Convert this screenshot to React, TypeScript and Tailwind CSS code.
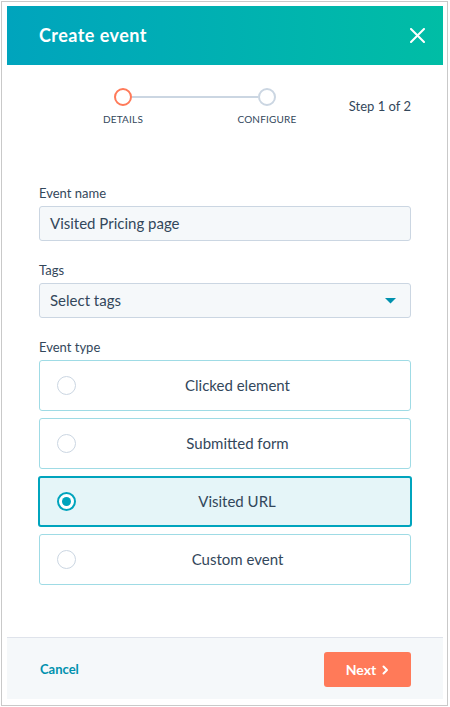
import { useState } from "react";

const eventTypes = ["Clicked element", "Submitted form", "Visited URL", "Custom event"];

function Radio({ checked }: { checked: boolean }) {
  return checked ? (
    <span className="w-[19px] h-[19px] rounded-full border-2 border-[#00a4bd] bg-white flex items-center justify-center shrink-0">
      <span className="w-[9px] h-[9px] rounded-full bg-[#00a4bd]" />
    </span>
  ) : (
    <span className="w-[19px] h-[19px] rounded-full border-[1.5px] border-[#cbd6e2] bg-white shrink-0" />
  );
}

export default function App() {
  const [selected, setSelected] = useState("Visited URL");

  return (
    <div className="w-[450px] h-[707px] bg-white pt-px pl-px font-['Lato',sans-serif] text-[#33475b]">
      <div className="w-[447px] h-[705px] border border-[#c9c9c9] pl-[5px] pr-[4px] pt-[4px] pb-[6px]">
        <div className="h-full flex flex-col bg-white">
          {/* Header */}
          <div className="h-[59px] shrink-0 flex items-center justify-between pl-8 pr-[18px] bg-gradient-to-r from-[#00a4bd] to-[#00bda5]">
            <h1 className="text-[18px] font-bold text-white tracking-[0.45px]">Create event</h1>
            <svg width="15" height="15" viewBox="0 0 15 15" fill="none" className="text-white">
              <path d="M1 1L14 14M14 1L1 14" stroke="currentColor" strokeWidth="2" strokeLinecap="round" />
            </svg>
          </div>

          {/* Body */}
          <div className="flex-1 px-8">
            {/* Stepper */}
            <div className="flex items-start pt-[23px]">
              <div className="relative ml-[49px] w-[214px] flex justify-between">
                <div className="absolute left-[44px] right-[44px] top-[8px] h-[2px] bg-[#cbd6e2]" />
                <div className="relative w-[70px] flex flex-col items-center">
                  <span className="w-[18px] h-[18px] rounded-full border-2 border-[#ff7a59] bg-white" />
                  <span className="mt-[7px] text-[10px] leading-[12px] tracking-[0.2px]">DETAILS</span>
                </div>
                <div className="relative w-[70px] flex flex-col items-center">
                  <span className="w-[18px] h-[18px] rounded-full border-2 border-[#cbd6e2] bg-white" />
                  <span className="mt-[7px] text-[10px] leading-[12px] tracking-[0.2px]">CONFIGURE</span>
                </div>
              </div>
              <span className="ml-auto mt-[10px] text-[13px] leading-4">Step 1 of 2</span>
            </div>

            {/* Event name */}
            <label className="block mt-[60px] text-[13px] leading-4">Event name</label>
            <div className="mt-[5px] h-[35px] flex items-center px-[10px] rounded-[3px] border border-[#cbd6e2] bg-[#f5f8fa] text-[15px]">
              Visited Pricing page
            </div>

            {/* Tags */}
            <label className="block mt-[21px] text-[13px] leading-4">Tags</label>
            <div className="mt-[5px] h-[35px] flex items-center justify-between pl-[10px] pr-[14px] rounded-[3px] border border-[#cbd6e2] bg-[#f5f8fa] text-[15px]">
              <span>Select tags</span>
              <svg width="11" height="6" viewBox="0 0 11 6">
                <path d="M0 0H11L5.5 5.5Z" fill="#0091ae" />
              </svg>
            </div>

            {/* Event type */}
            <label className="block mt-[21px] text-[13px] leading-4">Event type</label>
            <div className="mt-[5px] flex flex-col gap-[7px]">
              {eventTypes.map((t) => {
                const on = t === selected;
                return (
                  <button
                    key={t}
                    onClick={() => setSelected(t)}
                    className={
                      on
                        ? "h-[51px] flex items-center gap-[6px] pl-[17px] pr-[18px] rounded-[3px] border-2 border-[#00a4bd] bg-[#e5f5f8] -mx-px"
                        : "h-[51px] flex items-center gap-[6px] pl-[17px] pr-[17px] rounded-[3px] border border-[#9fdbe5] bg-white"
                    }
                  >
                    <Radio checked={on} />
                    <span className="flex-1 text-center text-[15px]">{t}</span>
                  </button>
                );
              })}
            </div>
          </div>

          {/* Footer */}
          <div className="shrink-0 h-[62px] border-t border-[#dfe3eb] bg-[#f5f8fa] flex items-center justify-between pl-[33px] pr-8 pt-[2px]">
            <button className="text-[13px] font-bold text-[#0091ae]">Cancel</button>
            <button className="w-[87px] h-[35px] rounded-[3px] bg-[#ff7a59] text-white text-[14px] font-bold flex items-center justify-center gap-[6px]">
              Next
              <svg width="7" height="10" viewBox="0 0 7 10" fill="none">
                <path d="M1.5 1.5L5 5L1.5 8.5" stroke="white" strokeWidth="2" strokeLinecap="round" strokeLinejoin="round" />
              </svg>
            </button>
          </div>
        </div>
      </div>
    </div>
  );
}
